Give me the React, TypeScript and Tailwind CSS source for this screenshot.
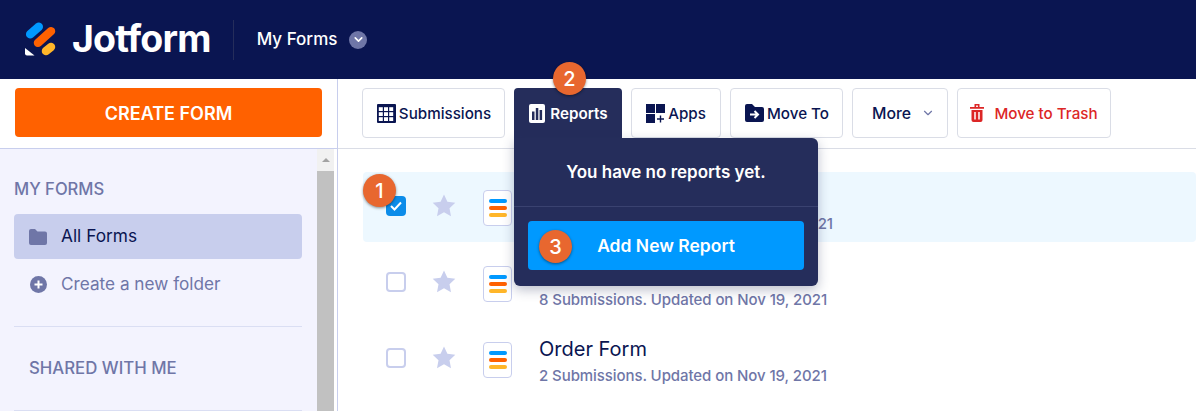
import { ChevronDown } from 'lucide-react';

const FONT = "font-['Inter',sans-serif]";

function Logo() {
  return (
    <svg width="36" height="39" viewBox="21 20 36 39" className="shrink-0" strokeLinecap="round" strokeWidth="8.5">
      <path d="M28.200 34.300L36.800 26.700" stroke="#0099ff" />
      <path d="M36 42.800L49 31.200" stroke="#ff6100" />
      <path d="M44 51.100L49 46.900" stroke="#ffb629" />
      <path d="M23 48L23 53.500Q23 55.500 25 55.500L32.500 55.500Z" fill="#fff" strokeWidth="0" />
    </svg>
  );
}

function TableIcon() {
  return (
    <svg width="19" height="19" viewBox="0 0 19 19" className="shrink-0">
      <rect width="19" height="19" rx="1" fill="#0a1551" />
      {[1.8, 7, 12.2].map((x) =>
        [3.2, 8.2, 13.2].map((y) => <rect key={`${x}-${y}`} x={x} y={y} width="4" height="3.800" fill="#fff" />),
      )}
    </svg>
  );
}

function ReportIcon() {
  return (
    <svg width="16" height="19" viewBox="0 0 16 19" className="shrink-0">
      <rect width="16" height="19" rx="2" fill="#fff" />
      <rect x="3" y="7.500" width="2.500" height="8.500" fill="#252d5b" />
      <rect x="6.800" y="4" width="2.500" height="12" fill="#252d5b" />
      <rect x="10.600" y="6" width="2.500" height="10" fill="#252d5b" />
    </svg>
  );
}

function AppsIcon() {
  return (
    <svg width="19" height="19" viewBox="0 0 19 19" className="shrink-0">
      <rect width="9" height="9" fill="#0a1551" />
      <rect x="10" width="9" height="9" fill="#0a1551" />
      <rect y="10" width="9" height="9" fill="#0a1551" />
      <path d="M14.500 11.500v7M11 15h7" stroke="#0a1551" strokeWidth="1.400" />
    </svg>
  );
}

function MoveIcon() {
  return (
    <svg width="19" height="18" viewBox="0 0 19 18" className="shrink-0">
      <path d="M2 0h5l3 3h7a2 2 0 0 1 2 2v11a2 2 0 0 1-2 2H2a2 2 0 0 1-2-2V2a2 2 0 0 1 2-2z" fill="#0a1551" />
      <path d="M5 10.500h7M9.500 7l3.500 3.500L9.500 14" stroke="#fff" strokeWidth="2" fill="none" />
    </svg>
  );
}

function TrashIcon() {
  return (
    <svg width="14" height="18" viewBox="0 0 14 18" className="shrink-0">
      <path d="M0 3h14v1.800H0zM4.500 0h5v3h-1.600V1.500h-1.800V3H4.500z" fill="#dc2626" />
      <path d="M1.500 6h11v10a2 2 0 0 1-2 2h-7a2 2 0 0 1-2-2z" fill="#dc2626" />
      <path d="M5 8v7.500M9 8v7.500" stroke="#fff" strokeWidth="1.500" />
    </svg>
  );
}

function Star() {
  return (
    <svg width="24" height="23" viewBox="0 0 24 23" className="shrink-0">
      <path
        d="M12 0.500l3.400 7.300 7.900 1-5.800 5.500 1.500 7.900-7-3.900-7 3.900 1.500-7.900L0.700 8.800l7.900-1z"
        fill="#c8ceed"
      />
    </svg>
  );
}

function FormIcon() {
  return (
    <div className="flex h-[36px] w-[29px] shrink-0 flex-col items-center justify-center gap-[3px] rounded-[4px] border border-[#c8ceed] bg-white">
      <span className="h-[4px] w-[18px] rounded-full bg-[#0099ff]" />
      <span className="h-[4px] w-[18px] rounded-full bg-[#ff6100]" />
      <span className="h-[4px] w-[18px] rounded-full bg-[#ffb629]" />
    </div>
  );
}

function Badge({ n, className }: { n: number; className: string }) {
  return (
    <div
      className={`absolute flex h-[33px] w-[33px] items-center justify-center rounded-full bg-[#e8672f] text-[20px] font-medium text-white shadow-[0_1px_3px_rgba(0,0,0,0.45)] ${className}`}
    >
      {n}
    </div>
  );
}

function ToolButton({ children, className = '' }: { children: React.ReactNode; className?: string }) {
  return (
    <div
      className={`flex h-[50px] items-center justify-center rounded-[4px] border border-[#dadde6] bg-white text-[15.200px] font-medium text-[#0a1551] ${className}`}
    >
      {children}
    </div>
  );
}

function FormRow({ title, meta, selected }: { title: string; meta: string; selected?: boolean }) {
  return (
    <div className={`flex h-[70px] items-center rounded-[4px] pl-[23px] ${selected ? 'bg-[#edf8ff]' : ''}`}>
      {selected ? (
        <div className="-mt-[3px] flex h-[20px] w-[20px] items-center justify-center rounded-[4px] bg-[#0c8ce9]">
          <svg width="12" height="10" viewBox="0 0 12 10">
            <path d="M1 5l3.500 3.500L11 1.500" stroke="#fff" strokeWidth="2" fill="none" />
          </svg>
        </div>
      ) : (
        <div className="-mt-[3px] h-[20px] w-[20px] rounded-[4px] border-2 border-[#c8ceed] bg-white" />
      )}
      <div className="-mt-[3px] ml-[26px]">
        <Star />
      </div>
      <div className="mt-[2px] ml-[27px]">
        <FormIcon />
      </div>
      <div className="ml-[27px] pt-[5px]">
        <div className="text-[20px] leading-[24px] text-[#0a1551]">{title}</div>
        <div className="mt-[5px] text-[15px] leading-[20px] font-medium tracking-[-0.08px] whitespace-nowrap text-[#6f76a7]">
          {meta}
        </div>
      </div>
    </div>
  );
}

export default function App() {
  return (
    <div className={`relative h-[411px] w-[1196px] overflow-hidden bg-white ${FONT}`}>
      <header className="flex h-[79px] items-center bg-[#0a1551] pl-[23px]">
        <Logo />
        <span className="ml-[13px] text-[37.500px] font-bold tracking-[-0.8px] text-white">Jotform</span>
        <div className="ml-[22px] h-[40px] w-px bg-[#252d5b]" />
        <span className="ml-[23px] text-[17px] font-medium text-white">My Forms</span>
        <div className="ml-[12px] flex h-[18px] w-[18px] items-center justify-center rounded-full bg-[#6f76a7]">
          <ChevronDown size={13} strokeWidth={3} color="#fff" />
        </div>
      </header>

      <div className="flex h-[332px]">
        <aside className="flex w-[338px] shrink-0 flex-col border-r border-[#c8ceed]">
          <div className="flex h-[70px] shrink-0 items-start border-b border-[#c8ceed] px-[15px] pt-[9px]">
            <div className="flex h-[49px] w-[307px] items-center justify-center rounded-[4px] bg-[#ff6100] pt-px text-[18px] font-semibold text-white">
              CREATE FORM
            </div>
          </div>
          <div className="flex flex-1 overflow-hidden">
            <div className="flex-1 bg-[#f3f3fe] pt-[28px] pl-[14px]">
              <div className="text-[16.600px] leading-[24px] font-medium text-[#6f76a7]">MY FORMS</div>
              <div className="mt-[13px] flex h-[45px] w-[288px] items-center rounded-[4px] bg-[#c8ceed] pl-[15px]">
                <svg width="18" height="16" viewBox="0 0 18 16">
                  <path
                    d="M2 0h4l2.500 2.500H16a2 2 0 0 1 2 2V14a2 2 0 0 1-2 2H2a2 2 0 0 1-2-2V2a2 2 0 0 1 2-2z"
                    fill="#6f76a7"
                  />
                </svg>
                <span className="-mt-[2px] ml-[14px] text-[17.300px] text-[#0a1551]">All Forms</span>
              </div>
              <div className="mt-[3px] flex h-[45px] w-[288px] items-center pl-[16px]">
                <svg width="17" height="17" viewBox="0 0 17 17">
                  <circle cx="8.500" cy="8.500" r="8.500" fill="#6f76a7" />
                  <path d="M8.500 4.500v8M4.500 8.500h8" stroke="#fff" strokeWidth="2" />
                </svg>
                <span className="-mt-[2px] ml-[14px] text-[17.200px] text-[#6f76a7]">Create a new folder</span>
              </div>
              <div className="mt-[19px] h-px w-[288px] bg-[#dadef3]" />
              <div className="mt-[29px] pl-[15px] text-[16.800px] leading-[24px] font-medium text-[#6f76a7]">
                SHARED WITH ME
              </div>
              <div className="mt-[30px] h-px w-[288px] bg-[#dadef3]" />
            </div>
            <div className="flex w-[17px] shrink-0 flex-col bg-[#f1f1f1]">
              <div className="flex h-[22px] items-center justify-center">
                <div className="h-0 w-0 border-x-[4px] border-b-[4px] border-x-transparent border-b-[#a3a3a3]" />
              </div>
              <div className="flex-1 bg-[#c1c1c1]" />
            </div>
            <div className="w-[3px] shrink-0 bg-white" />
          </div>
        </aside>

        <main className="flex min-w-0 flex-1 flex-col">
          <div className="flex h-[70px] shrink-0 items-start gap-[9px] border-b border-[#dadde6] pt-[9px] pl-[24px]">
            <ToolButton className="w-[143px] gap-[3px] pl-px">
              <TableIcon />
              <span className="mt-[2px]">Submissions</span>
            </ToolButton>
            <div className="flex h-[50px] w-[108px] items-center justify-center gap-[5px] rounded-t-[4px] bg-[#252d5b] pl-px text-[15.200px] font-semibold text-white">
              <ReportIcon />
              <span className="mt-[2px]">Reports</span>
            </div>
            <ToolButton className="w-[90px] gap-[3px]">
              <AppsIcon />
              <span className="mt-[2px]">Apps</span>
            </ToolButton>
            <ToolButton className="w-[113px] gap-[3px] pl-px">
              <MoveIcon />
              <span className="mt-[2px]">Move To</span>
            </ToolButton>
            <ToolButton className="w-[96px] gap-[10px] pl-[7px]">
              <span className="mt-[2px] text-[15.800px]">More</span>
              <ChevronDown size={14} color="#6f76a7" />
            </ToolButton>
            <ToolButton className="w-[154px] gap-[10px] !text-[#dc2626]">
              <TrashIcon />
              <span className="mt-[2px]">Move to Trash</span>
            </ToolButton>
          </div>
          <div className="flex flex-col gap-[6px] pt-[23px] pl-[25px]">
            <FormRow title="Contact Form" meta="12 Submissions. Updated on Nov 19, 2021" selected />
            <FormRow title="Sign Up Form" meta="8 Submissions. Updated on Nov 19, 2021" />
            <FormRow title="Order Form" meta="2 Submissions. Updated on Nov 19, 2021" />
          </div>
        </main>
      </div>

      {/* Reports dropdown, hangs off the active toolbar tab */}
      <div className="absolute top-[138px] left-[514px] w-[304px] rounded-tr-[6px] rounded-b-[6px] bg-[#252d5b] shadow-[0_4px_12px_rgba(37,45,91,0.3)]">
        <div className="flex h-[69px] items-center justify-center border-b border-[#3a4270] pt-[2px] text-[17px] font-semibold text-white">
          You have no reports yet.
        </div>
        <div className="p-[14px] pb-[16px]">
          <div className="flex h-[49px] items-center justify-center rounded-[4px] bg-[#0099ff] pt-[2px] text-[17.500px] font-semibold text-white">
            Add New Report
          </div>
        </div>
      </div>

      <Badge n={1} className="top-[174px] left-[363px]" />
      <Badge n={2} className="top-[62px] left-[553px]" />
      <Badge n={3} className="top-[230px] left-[539px]" />
    </div>
  );
}
